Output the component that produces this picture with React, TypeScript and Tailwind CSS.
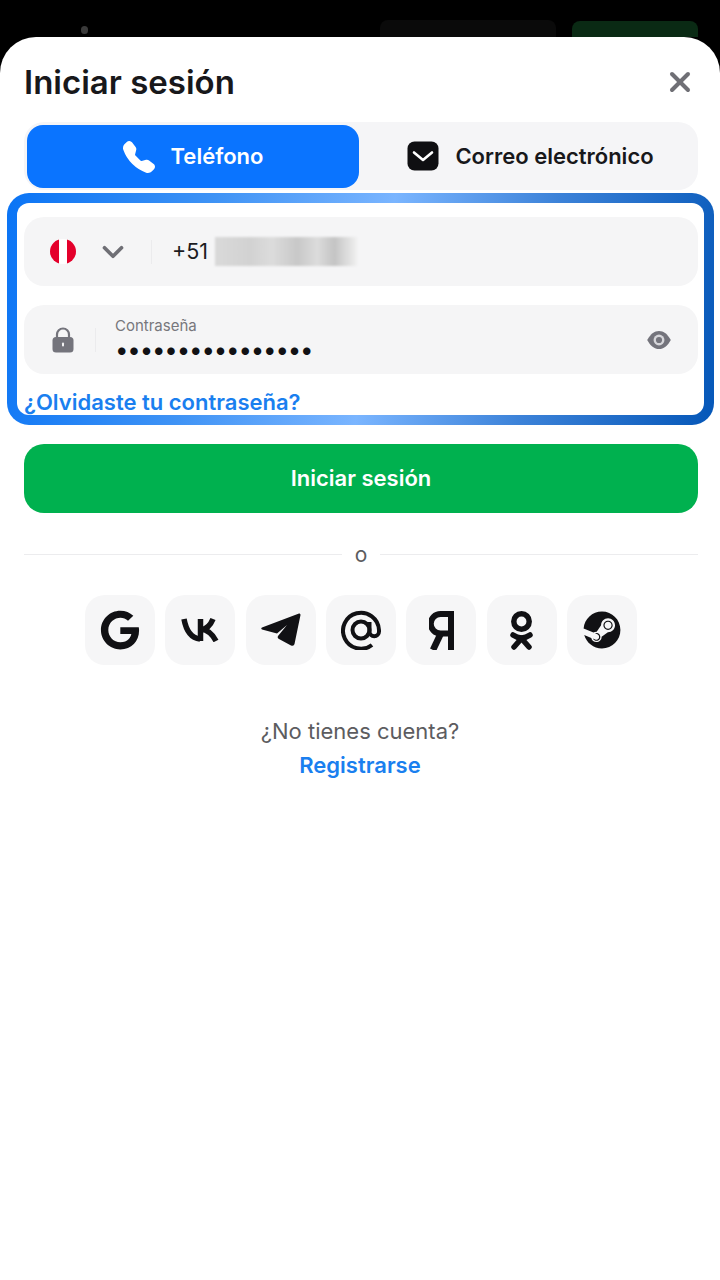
import { ChevronDown, X } from "lucide-react"
import { BsTelephoneFill } from "react-icons/bs"
import { FaGoogle, FaSteam } from "react-icons/fa"

const SocialButton = ({ children }: { children: React.ReactNode }) => (
  <div className="w-[70px] h-[70px] rounded-[20px] bg-[#f6f6f7] flex items-center justify-center text-[#111114]">
    {children}
  </div>
)

const MailIcon = () => (
  <svg width="34" height="30" viewBox="0 0 34 30">
    <rect x="1.5" y="0.5" width="31" height="29" rx="7" fill="#0f0f12" />
    <path d="M8 11.5 L17 19 L26 11.5" fill="none" stroke="#fff" strokeWidth="2.6" strokeLinecap="round" strokeLinejoin="round" />
  </svg>
)

const LockIcon = () => (
  <svg width="24" height="26" viewBox="0 0 24 26">
    <path d="M6 11 V7.5 a6 6 0 0 1 12 0 V11" fill="none" stroke="#74747c" strokeWidth="2.2" />
    <rect x="1.5" y="10" width="21" height="15.5" rx="3.5" fill="#74747c" />
    <rect x="11" y="15.5" width="2" height="4" rx="1" fill="#f5f5f6" />
  </svg>
)

const EyeIcon = () => (
  <svg width="26" height="20" viewBox="0 0 28 22">
    <path d="M1 11 C4.5 4.5 9 1 14 1 C19 1 23.5 4.5 27 11 C23.5 17.5 19 21 14 21 C9 21 4.5 17.5 1 11 Z" fill="#74747c" />
    <circle cx="14" cy="11" r="6" fill="#d6d6da" />
    <circle cx="14" cy="11" r="3.4" fill="#74747c" />
  </svg>
)

const VkIcon = () => (
  <svg width="38" height="24" viewBox="0 0 38 24" fill="none" stroke="currentColor" strokeWidth="5.5">
    <path d="M3 1 C5 12 10 20 19 21" />
    <path d="M19.5 1 V23" />
    <path d="M20 12 C26 11 30 6 32 1" />
    <path d="M20 11 C28 12 32 17 35 23" />
  </svg>
)

const TelegramIcon = () => (
  <svg width="40" height="34" viewBox="0 0 40 34">
    <path
      d="M38 0.5 L1 14.5 Q-0.5 15.5 1 16.5 L16 20.5 L26 12 L17 23 Q16 25 18 26 L30 32.5 Q33 33.5 33.5 31 L39.5 2 Q39.5 0 38 0.5 Z"
      fill="currentColor"
    />
  </svg>
)

const MailRuIcon = () => (
  <svg width="40" height="40" viewBox="0 0 40 40" fill="none" stroke="currentColor" strokeWidth="4">
    <circle cx="20" cy="20" r="8.5" />
    <path d="M31 35 A18 18 0 1 1 38 20 V21.5 a4.7 4.7 0 0 1 -9.5 0 V12" />
  </svg>
)

const YandexIcon = () => (
  <svg width="25" height="39" viewBox="0 0 25 39" fill="none" stroke="currentColor" strokeWidth="6">
    <path d="M22 3 H11.5 a8.7 8.7 0 0 0 0 19.5 H21" />
    <path d="M22 0 V39" />
    <path d="M12.5 21 L4 39" strokeWidth="6.5" />
  </svg>
)

const OkIcon = () => (
  <svg width="23" height="39" viewBox="0 0 23 39" fill="none" stroke="currentColor" strokeWidth="5.5" strokeLinecap="round">
    <circle cx="11.5" cy="10.5" r="7.7" />
    <path d="M3 24 Q11.5 30 20 24" />
    <path d="M11.5 27.5 L4 36" />
    <path d="M11.5 27.5 L19 36" />
  </svg>
)

const App = () => {
  return (
    <div className="min-h-[1280px] bg-black font-['Inter',sans-serif] flex flex-col">
      {/* page behind the sheet */}
      <div className="h-[37px] flex items-end relative overflow-hidden">
        <div className="absolute left-[81px] top-[26px] w-[7px] h-[8px] rounded-full bg-[#3a3a3a]" />
        <div className="absolute left-[380px] top-[20px] w-[176px] h-[24px] rounded-lg bg-[#0a0a0a]" />
        <div className="absolute left-[572px] top-[21px] w-[126px] h-[24px] rounded-lg bg-[#0a2a14]" />
      </div>

      <div className="flex-1 bg-white rounded-t-[36px] pl-6 pr-[22px] flex flex-col">
        {/* header */}
        <div className="h-[85px] flex items-center justify-between shrink-0">
          <h1 className="text-[33px] font-semibold text-[#18181b] mt-[7px]">Iniciar sesión</h1>
          <X className="w-[32px] h-[32px] text-[#6f6f75] mr-[2px] mt-[5px]" strokeWidth={3} />
        </div>

        {/* tabs */}
        <div className="h-[68px] rounded-[20px] bg-[#f5f5f7] p-[3px] flex">
          <div className="w-[332px] h-[63px] rounded-[16px] bg-[#0a74ff] flex items-center justify-center gap-[16px] text-white">
            <BsTelephoneFill className="w-[32px] h-[32px]" />
            <span className="text-[22px] font-semibold">Teléfono</span>
          </div>
          <div className="flex-1 flex items-center justify-center gap-[15px] text-[#18181b] pl-[6px]">
            <MailIcon />
            <span className="text-[22px] font-semibold">Correo electrónico</span>
          </div>
        </div>

        {/* highlighted box */}
        <div className="ml-[-17px] mr-[-16px] mt-[3px] h-[232px] rounded-[22px] p-[10px] bg-[linear-gradient(100deg,#0a74f5_0%,#3f93f5_28%,#7ab5ff_52%,#3c82d8_74%,#0557b8_100%)]">
          <div className="h-full rounded-[12px] bg-white pl-[7px] pr-[6px] pt-[14px] flex flex-col overflow-hidden">
            <div className="h-[69px] rounded-[20px] bg-[#f5f5f6] flex items-center pl-[26px] shrink-0">
              <div className="w-[26px] h-[25px] rounded-full overflow-hidden flex">
                <div className="flex-1 bg-[#e4002b]" />
                <div className="flex-1 bg-white" />
                <div className="flex-1 bg-[#e4002b]" />
              </div>
              <ChevronDown className="w-[34px] h-[34px] text-[#6f6f75] ml-[20px]" strokeWidth={2.6} />
              <div className="w-px h-[24px] bg-[#ebebed] ml-[21px]" />
              <span className="w-[43px] text-[21.5px] text-[#1c1c1f] ml-[20px]">+51</span>
              <div className="w-[142px] h-[29px] blur-[1px] bg-[linear-gradient(90deg,#d9d9d9_0%,#d2d2d2_25%,#dcdcdc_40%,#c8c8c8_58%,#dcdcdc_72%,#c4c4c4_84%,#f0f0f0_100%)]" />
            </div>

            <div className="h-[69px] rounded-[20px] bg-[#f5f5f6] flex items-center pl-[27px] pr-[26px] mt-[19px] shrink-0">
              <LockIcon />
              <div className="w-px h-[24px] bg-[#ebebed] ml-[20px]" />
              <div className="flex flex-col ml-[19px] flex-1 mt-[3px]">
                <span className="text-[15px] leading-[18px] text-[#77777c] mt-[-3px]">Contraseña</span>
                <span className="text-[24px] leading-[26px] text-[#111114] tracking-[-1.16px] whitespace-nowrap mt-[2px]">••••••••••••••••</span>
              </div>
              <EyeIcon />
            </div>

            <a className="text-[22px] leading-[26px] font-semibold text-[#1a7fef] mt-[15px] whitespace-nowrap">¿Olvidaste tu contraseña?</a>
          </div>
        </div>

        {/* submit */}
        <button className="h-[69px] mt-[19px] rounded-[20px] bg-[#00b14f] text-white text-[22px] font-semibold shrink-0">
          Iniciar sesión
        </button>

        {/* divider */}
        <div className="flex items-center mt-[30px] h-[22px]">
          <div className="flex-1 h-px bg-[#ececee]" />
          <span className="w-[38px] text-center text-[21px] leading-[22px] text-[#5c5c60] mt-[2px]">o</span>
          <div className="flex-1 h-px bg-[#ececee]" />
        </div>

        {/* social logins */}
        <div className="flex justify-center gap-[10.4px] mt-[30px]">
          <SocialButton>
            <FaGoogle className="w-[40px] h-[40px]" />
          </SocialButton>
          <SocialButton>
            <VkIcon />
          </SocialButton>
          <SocialButton>
            <TelegramIcon />
          </SocialButton>
          <SocialButton>
            <MailRuIcon />
          </SocialButton>
          <SocialButton>
            <YandexIcon />
          </SocialButton>
          <SocialButton>
            <OkIcon />
          </SocialButton>
          <SocialButton>
            <FaSteam className="w-[38px] h-[38px]" />
          </SocialButton>
        </div>

        {/* register */}
        <div className="flex flex-col items-center mt-[51px] pr-[2px]">
          <span className="text-[22px] leading-[30px] text-[#5c5c60]">¿No tienes cuenta?</span>
          <a className="text-[22px] leading-[30px] font-semibold text-[#1a7fef] mt-[4px]">Registrarse</a>
        </div>
      </div>
    </div>
  )
}

export default App
